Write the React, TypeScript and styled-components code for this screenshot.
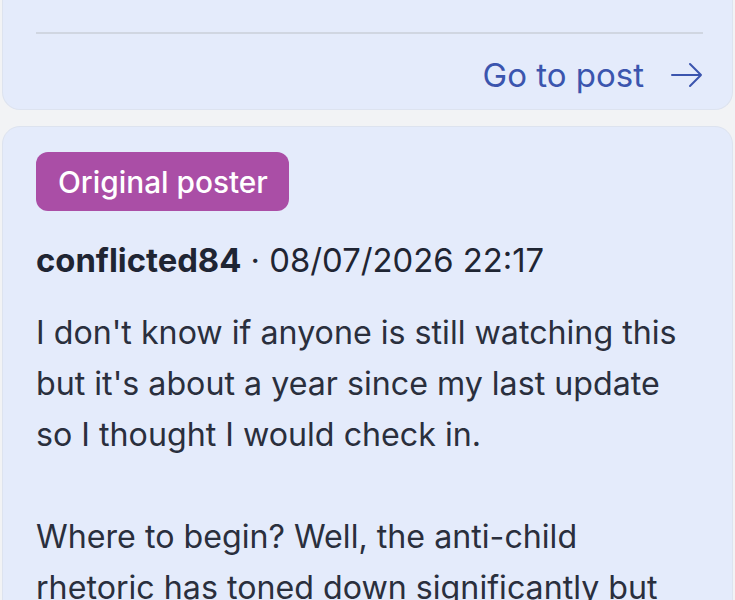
import React from "react";
import styled, { createGlobalStyle } from "styled-components";

const Global = createGlobalStyle`
  html, body { margin: 0; padding: 0; background: #f2f3f5; }
  body { font-family: Inter, "Noto Sans", "Liberation Sans", sans-serif; -webkit-font-smoothing: antialiased; }
  * { box-sizing: border-box; }
`;

const Page = styled.div`
  width: 735px;
  height: 600px;
  overflow: hidden;
  padding: 0 2px;
  display: flex;
  flex-direction: column;
  gap: 16px;
  background: #f2f3f5;
`;

const Card = styled.section<{ $cut?: boolean }>`
  background: #e4ebfb;
  border: 1px solid #dde3ef;
  border-top: ${(p) => (p.$cut ? "none" : "1px solid #dde3ef")};
  border-radius: ${(p) => (p.$cut ? "0 0 18px 18px" : "18px")};
  padding: ${(p) => (p.$cut ? "32px 29px 0 33px" : "25px 29px 0 33px")};
  display: flex;
  flex-direction: column;
`;

const Divider = styled.hr`
  border: none;
  height: 2px;
  background: #d0d6e1;
  margin: 0;
`;

const Footer = styled.div`
  display: flex;
  justify-content: flex-end;
  padding: 22px 0 15px;
`;

const GoLink = styled.a`
  display: inline-flex;
  align-items: center;
  gap: 26px;
  color: #3b55ae;
  font-size: 33px;
  text-decoration: none;
  line-height: 38px;
`;

const Badge = styled.span`
  align-self: flex-start;
  background: #aa4ea6;
  color: #ffffff;
  font-size: 29.8px;
  font-weight: 500;
  border-radius: 12px;
  padding: 0 21px 0 22px;
  height: 59px;
  display: inline-flex;
  align-items: center;
`;

const Meta = styled.div`
  margin-top: 30px;
  font-size: 32.8px;
  line-height: 38px;
  color: #1f2533;
`;

const Author = styled.strong`
  font-weight: 700;
`;

const Body = styled.div`
  margin-top: 28px;
  font-size: 32.2px;
  line-height: 51px;
  color: #2a2f3d;
`;

const Para = styled.p`
  margin: 0 0 51px;
`;

function Arrow() {
  return (
    <svg width="33" height="26" viewBox="0 0 33 26" fill="none" stroke="#3b55ae" strokeWidth="2" strokeLinecap="round" strokeLinejoin="round">
      <path d="M2 13h29M20 2l11 11-11 11" />
    </svg>
  );
}

export default function App() {
  return (
    <>
      <Global />
      <Page>
        <Card $cut>
          <Divider />
          <Footer>
            <GoLink href="#">
              Go to post <Arrow />
            </GoLink>
          </Footer>
        </Card>
        <Card>
          <Badge>Original poster</Badge>
          <Meta>
            <Author>conflicted84</Author> · 08/07/2026 22:17
          </Meta>
          <Body>
            <Para>
              I don't know if anyone is still watching this but it's about a year since my last update so I thought I would check in.
            </Para>
            <Para>
              Where to begin? Well, the anti-child rhetoric has toned down significantly but
            </Para>
          </Body>
        </Card>
      </Page>
    </>
  );
}
